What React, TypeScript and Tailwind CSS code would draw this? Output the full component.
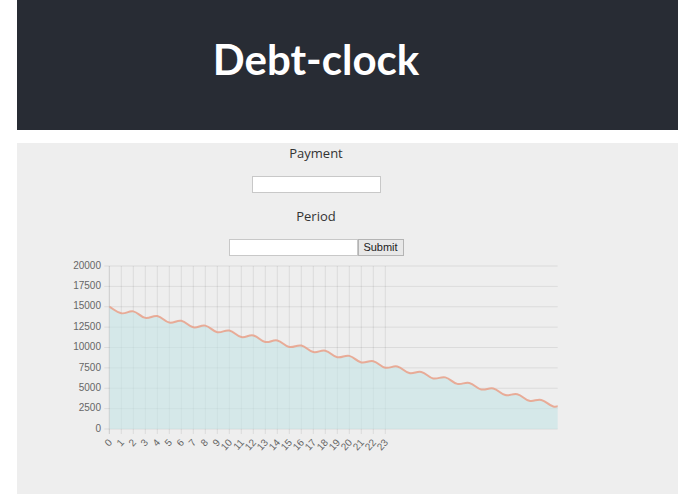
import React from "react";

const X0 = 109.3;
const STEP = 12;
const LEFT = 109.3;
const RIGHT = 557.7;
const BOTTOM = 429;
const TOP = 266;

const xAt = (i: number) => X0 + STEP * i;
const yAt = (v: number) => BOTTOM - (v * (BOTTOM - TOP)) / 20000;

// balance goes down a bit each payment, with a little interest in between
const values = Array.from({ length: 40 }, (_, i) => {
  const k = Math.floor(i / 2);
  let v = 15000 - 563 * k - 4 * k * k;
  if (i % 2) v -= 800;
  return v;
});

type Pt = { x: number; y: number };

const points: Pt[] = values.map((v, i) => ({ x: xAt(i), y: yAt(v) }));

// same curve maths as chart.js (tension 0.4)
function controls(prev: Pt, cur: Pt, next: Pt, t = 0.4) {
  const d01 = Math.hypot(cur.x - prev.x, cur.y - prev.y);
  const d12 = Math.hypot(next.x - cur.x, next.y - cur.y);
  const sum = d01 + d12 || 1;
  const fa = (t * d01) / sum;
  const fb = (t * d12) / sum;
  return {
    prev: { x: cur.x - fa * (next.x - prev.x), y: cur.y - fa * (next.y - prev.y) },
    next: { x: cur.x + fb * (next.x - prev.x), y: cur.y + fb * (next.y - prev.y) },
  };
}

function linePath(pts: Pt[]) {
  const cps = pts.map((p, i) =>
    controls(pts[i - 1] || p, p, pts[i + 1] || p)
  );
  let d = `M${pts[0].x},${pts[0].y}`;
  for (let i = 1; i < pts.length; i++) {
    const a = cps[i - 1].next;
    const b = cps[i].prev;
    d += ` C${a.x},${a.y} ${b.x},${b.y} ${pts[i].x},${pts[i].y}`;
  }
  return d;
}

const line = linePath(points);
const area = `${line} L${points[points.length - 1].x},${BOTTOM} L${points[0].x},${BOTTOM} Z`;

const yTicks = [0, 2500, 5000, 7500, 10000, 12500, 15000, 17500, 20000];
const xLabels = Array.from({ length: 24 }, (_, i) => i);

const DebtChart = () => (
  <svg
    width={598}
    height={200}
    viewBox="17 258 598 200"
    className="block"
    style={{ fontFamily: "'Liberation Sans', Arial, sans-serif" }}
  >
    <defs>
      <clipPath id="area">
        <rect x={LEFT} y={TOP - 10} width={RIGHT - LEFT} height={BOTTOM - TOP + 10} />
      </clipPath>
    </defs>

    {yTicks.map((v) => (
      <g key={v}>
        <line
          x1={104.3}
          x2={RIGHT}
          y1={yAt(v)}
          y2={yAt(v)}
          stroke="rgba(0,0,0,0.08)"
          strokeWidth={1}
        />
        <text x={101} y={yAt(v)} textAnchor="end" dominantBaseline="middle" fontSize={10} fill="#666">
          {v}
        </text>
      </g>
    ))}

    {xLabels.map((i) => (
      <g key={i}>
        <line
          x1={xAt(i)}
          x2={xAt(i)}
          y1={TOP}
          y2={434}
          stroke={i === 0 ? "rgba(0,0,0,0.15)" : "rgba(0,0,0,0.08)"}
          strokeWidth={1}
        />
        <text
          x={xAt(i) + 1.5}
          y={441}
          textAnchor="end"
          dominantBaseline="middle"
          fontSize={10}
          fill="#666"
          transform={`rotate(-48 ${xAt(i) + 1.5} 441)`}
        >
          {i}
        </text>
      </g>
    ))}

    <g clipPath="url(#area)">
      <path d={area} fill="rgba(196,229,230,0.6)" />
      <path d={line} fill="none" stroke="#e9a088" strokeOpacity={0.85} strokeWidth={2} />
    </g>
  </svg>
);

export default function App() {
  return (
    <div className="min-h-screen bg-white font-['Open_Sans','Noto_Sans',sans-serif]">
      <header className="mx-[17px] h-[130px] bg-[#282c34] pt-[38px]">
        <div className="w-[598px] text-center">
          <h1 className="font-['Lato',sans-serif] text-[42px] font-bold leading-none text-white">
            Debt-clock
          </h1>
        </div>
      </header>

      <main className="mx-[17px] mt-[13px] h-[351px] bg-[#eeeeee]">
        <div className="flex w-[598px] flex-col items-center">
          <p className="mt-[1px] text-[13px] leading-[18px] text-[#333]">Payment</p>
          <input
            type="text"
            className="mt-[14px] h-[17px] w-[129px] border border-[#c8c8c8] bg-white"
          />
          <p className="mt-[14px] text-[13px] leading-[18px] text-[#333]">Period</p>
          <div className="mt-[14px] flex">
            <input
              type="text"
              className="h-[17px] w-[129px] border border-[#c8c8c8] bg-white"
            />
            <button
              type="button"
              className="h-[17px] w-[46px] border border-[#b4b4b4] bg-[#e8e8e8] font-['Liberation_Sans',Arial,sans-serif] text-[11px] leading-none text-[#222]"
            >
              Submit
            </button>
          </div>
          <div className="mt-[2px]">
            <DebtChart />
          </div>
        </div>
      </main>
    </div>
  );
}
